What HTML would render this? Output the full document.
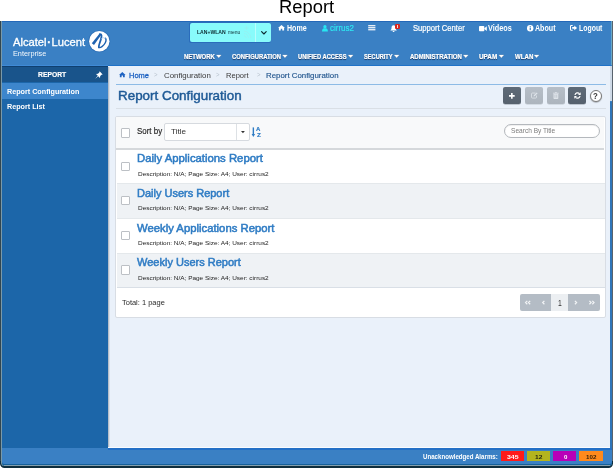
<!DOCTYPE html>
<html><head><meta charset="utf-8"><title>Report</title>
<style>
html,body{margin:0;padding:0;background:#fff;}
body{width:615px;height:471px;position:relative;overflow:hidden;font-family:"Liberation Sans",sans-serif;}
.t{position:absolute;white-space:nowrap;line-height:1;transform-origin:0 50%;display:block;}
.b{position:absolute;box-sizing:border-box;}
svg{position:absolute;overflow:visible;}
</style></head><body>
<span class="t" style="left:279.40px;top:-1.64px;font-size:18px;font-weight:400;color:#000;transform:scaleX(1.0216);">Report</span>
<div style="position:absolute;left:0;top:0;width:615px;height:471px;filter:blur(0.3px);">
<!-- window frame -->
<div class="b" style="left:0;top:21px;width:613px;height:446.9px;background:#0f2e3e;border-radius:0 0 4.5px 4.5px;"></div>
<div class="b" style="left:0;top:21px;width:613px;height:440px;background:linear-gradient(to right,#2f4652 0,#2f4652 1px,#59636d 1px,#59636d 100%);"></div>
<div class="b" style="left:0.9px;top:21px;width:611.2px;height:445.4px;background:#7a99a9;border-radius:0 0 3.6px 3.6px;"></div>
<div class="b" style="left:1.7px;top:21px;width:610.4px;height:444.6px;background:#15609a;border-radius:0 0 3px 3px;"></div>
<div class="b" style="left:2.1px;top:21px;width:610px;height:443.4px;background:#3a80c4;border-radius:0 0 2.2px 2.2px;"></div>
<div class="b" style="left:610.7px;top:21px;width:1.4px;height:44px;background:#68a8c8;"></div>
<div class="b" style="left:3.5px;top:465.45px;width:606px;height:1.05px;background:#84a0af;"></div>
<!-- top highlight line -->
<div class="b" style="left:2.1px;top:21px;width:608.6px;height:1.4px;background:#2468b8;"></div>
<!-- sidebar -->
<div class="b" style="left:2.2px;top:66.3px;width:105.8px;height:381.5px;background:#1c66a9;"></div>
<div class="b" style="left:2.2px;top:66.3px;width:105.8px;height:16.2px;background:#19548b;"></div>
<div class="b" style="left:2.2px;top:82.5px;width:105.8px;height:16.5px;background:#3d86cc;"></div>
<!-- content bg -->
<div class="b" style="left:108px;top:66.3px;width:502.1px;height:382.1px;background:#eaf1fa;"></div>
<div class="b" style="left:2px;top:65px;width:106px;height:1.2px;background:#3f8ad6;"></div>
<div class="b" style="left:108px;top:65px;width:502.7px;height:1.3px;background:#1f72c8;"></div>
<div class="b" style="left:2.2px;top:66.2px;width:105.8px;height:1.3px;background:#0f4071;"></div>
<div class="b" style="left:108px;top:67px;width:2.2px;height:380.8px;background:linear-gradient(to right,rgba(70,80,95,.42),rgba(70,80,95,0));"></div>
<!-- right strip -->
<div class="b" style="left:610.1px;top:66.3px;width:2px;height:35.2px;background:#cfdae7;"></div>
<div class="b" style="left:610.1px;top:101.5px;width:2px;height:346.9px;background:#2f75b8;"></div>
<div class="b" style="left:108px;top:447.3px;width:502.1px;height:1.1px;background:#fafcff;"></div>
<div class="b" style="left:108px;top:448.4px;width:504.1px;height:1.2px;background:#2470c6;"></div>
<!-- breadcrumb underline -->
<div class="b" style="left:116px;top:83.7px;width:489.5px;height:1px;background:#8dbbe6;"></div>
<!-- title underline -->
<div class="b" style="left:116px;top:107.5px;width:489.5px;height:1px;background:#d9dfe6;"></div>
<!-- pin icon -->
<svg style="left:95px;top:70.5px" width="8" height="8" viewBox="0 0 8 8"><path d="M4.6 0.3 L7.7 3.4 L6.6 3.7 L5.2 5.1 L5 7 L3.2 5.2 L0.6 7.6 L0.4 7.4 L2.8 4.8 L1 3 L2.9 2.8 L4.3 1.4 Z" fill="#fff"/></svg>
<!-- logo circle -->
<svg style="left:88.8px;top:31.3px" width="20.6" height="20.6" viewBox="0 0 20.6 20.6">
<circle cx="10.3" cy="10.3" r="10.9" fill="#2b6db6"/>
<circle cx="10.3" cy="10.3" r="10.2" fill="#fff"/>
<path d="M2.8 12.2 L5.0 13.9 L12.0 4.2 L10.6 2.5 Z" fill="#1f62b0"/>
<path d="M10.9 3.1 C12.9 2.9 12.7 5 12.1 7.5 C11.2 11.2 9.3 15 9.9 16.3" fill="none" stroke="#1f62b0" stroke-width="1.8" stroke-linecap="round"/>
<path d="M9.9 16.3 C11 17.6 14.8 14.8 16.3 11.8 C17.3 9.8 17.2 8.2 16.4 7.2" fill="none" stroke="#1f62b0" stroke-width="1.4" stroke-linecap="round"/>
<path d="M12 8.2 C13.4 6.2 15.8 6.2 16.5 8.3" fill="none" stroke="#a9c9ea" stroke-width="0.8"/>
</svg>
<!-- LAN+WLAN box -->
<div class="b" style="left:188.8px;top:22.4px;width:82.5px;height:20.2px;background:#2a6cbc;border-radius:2.6px;"></div>
<div class="b" style="left:189.5px;top:23px;width:81.2px;height:19px;background:#88fbfb;border-radius:2px;"></div>
<div class="b" style="left:255.2px;top:23px;width:1px;height:19px;background:#b9fdfd;"></div>
<svg style="left:260.5px;top:31.2px" width="5.8" height="3.8" viewBox="0 0 5.8 3.8"><path d="M0.6 0.7 L2.9 3 L5.2 0.7" fill="none" stroke="#0c2a30" stroke-width="1.15" stroke-linecap="round" stroke-linejoin="round"/></svg>
<!-- faint wifi -->
<svg style="left:241px;top:25px" width="11" height="14" viewBox="0 0 11 14"><g fill="none" stroke="#9aeeee" stroke-width="0.7"><path d="M3 11 a2 2 0 0 1 2 2"/><path d="M3 8.6 a4.4 4.4 0 0 1 4.4 4.4"/><path d="M3 6.2 a6.8 6.8 0 0 1 6.8 6.8"/><path d="M5.5 1 v4 M3.5 3 h4"/></g></svg>
<!-- home icon (nav) -->
<svg style="left:278.3px;top:25px" width="7" height="5.6" viewBox="0 0 14 11"><path d="M7 0 L14 6 L12.2 6 L12.2 11 L8.5 11 L8.5 7.3 L5.5 7.3 L5.5 11 L1.8 11 L1.8 6 L0 6 Z" fill="#fff"/></svg>
<!-- user icon -->
<svg style="left:321.6px;top:24.7px" width="5.9" height="6.4" viewBox="0 0 11 12"><circle cx="5.5" cy="3.1" r="3.1" fill="#27e6f2"/><path d="M0 12 C0 7 2.5 6.2 5.5 6.2 C8.5 6.2 11 7 11 12 Z" fill="#27e6f2"/></svg>
<!-- list icon -->
<svg style="left:368.1px;top:25.4px" width="7.6" height="5.4" viewBox="0 0 16 12"><rect x="0" y="0" width="16" height="3" fill="#e8eef6"/><rect x="0" y="4.5" width="16" height="3" fill="#e8eef6"/><rect x="0" y="9" width="16" height="3" fill="#e8eef6"/></svg>
<!-- bell -->
<svg style="left:390.2px;top:24.8px" width="7.2" height="7.4" viewBox="0 0 14 15"><path d="M7 0.5 C10 0.5 11.2 3 11.2 6 C11.2 9 12.4 10 13.6 11.2 L0.4 11.2 C1.6 10 2.8 9 2.8 6 C2.8 3 4 0.5 7 0.5 Z" fill="#fff"/><path d="M5 12.3 a2 2 0 0 0 4 0 Z" fill="#fff"/></svg>
<div class="b" style="left:395.3px;top:23.6px;width:4.3px;height:5.4px;background:#d8261e;border-radius:1.3px;"></div>
<div class="b" style="left:397.1px;top:24.7px;width:0.8px;height:3.1px;background:#f6d6d2;"></div>
<!-- camera -->
<svg style="left:479.3px;top:25.5px" width="7.8" height="5.2" viewBox="0 0 15 10"><rect x="0" y="0" width="10.2" height="10" rx="1.5" fill="#fff"/><path d="M10.2 4.2 L15 0.4 L15 9.6 L10.2 5.8 Z" fill="#fff"/></svg>
<!-- info icon -->
<svg style="left:526.8px;top:24.8px" width="6.4" height="6.4" viewBox="0 0 12 12"><circle cx="6" cy="6" r="6" fill="#fff"/><rect x="5" y="5" width="2.2" height="4.6" fill="#3a80c4"/><rect x="5" y="2.2" width="2.2" height="1.9" fill="#3a80c4"/></svg>
<!-- logout icon -->
<svg style="left:570.3px;top:25px" width="7.2" height="5.8" viewBox="0 0 14 11"><path d="M5.2 1 H2.4 Q1 1 1 2.4 V8.6 Q1 10 2.4 10 H5.2" fill="none" stroke="#fff" stroke-width="2"/><path d="M4.3 3.6 H8.3 V0.8 L13.8 5.5 L8.3 10.2 V7.4 H4.3 Z" fill="#fff"/></svg>
<!-- menu carets -->
<svg style="left:0;top:0" width="615" height="471" viewBox="0 0 615 471"><g fill="#fff" stroke="#fff" stroke-width="0.3" stroke-linejoin="round" style="filter:drop-shadow(0 0.6px 0.6px rgba(0,0,30,.55))">
<path d="M216.3 55 h4.9 l-2.45 2.8 z"/>
<path d="M282.5 55 h4.9 l-2.45 2.8 z"/>
<path d="M348.2 55 h4.9 l-2.45 2.8 z"/>
<path d="M394.2 55 h4.9 l-2.45 2.8 z"/>
<path d="M463.3 55 h4.9 l-2.45 2.8 z"/>
<path d="M498.9 55 h4.9 l-2.45 2.8 z"/>
<path d="M534.1 55 h4.9 l-2.45 2.8 z"/>
</g></svg>
<!-- breadcrumb home icon -->
<svg style="left:119.4px;top:72.3px" width="6.6" height="5.4" viewBox="0 0 14 11"><path d="M7 0 L14 6 L12.2 6 L12.2 11 L8.5 11 L8.5 7.3 L5.5 7.3 L5.5 11 L1.8 11 L1.8 6 L0 6 Z" fill="#1f63c2"/></svg>
<!-- toolbar buttons -->
<div class="b" style="left:503.1px;top:87.1px;width:17.9px;height:16.8px;background:linear-gradient(#5e6a77,#56616d);border-radius:2px;box-shadow:0 0.6px 0.6px rgba(40,50,60,.45);"></div>
<div class="b" style="left:524.9px;top:87.1px;width:18.6px;height:16.8px;background:linear-gradient(#b6bec7,#adb5be);border-radius:2px;box-shadow:0 0.6px 0.6px rgba(90,100,110,.3);"></div>
<div class="b" style="left:546.6px;top:87.1px;width:18.6px;height:16.8px;background:linear-gradient(#b6bec7,#adb5be);border-radius:2px;box-shadow:0 0.6px 0.6px rgba(90,100,110,.3);"></div>
<div class="b" style="left:568px;top:87.1px;width:18px;height:16.8px;background:linear-gradient(#5e6a77,#56616d);border-radius:2px;box-shadow:0 0.6px 0.6px rgba(40,50,60,.45);"></div>
<!-- plus -->
<svg style="left:509.3px;top:92.6px" width="5.7" height="5.7" viewBox="0 0 6.4 6.4"><path d="M2.3 0 h1.8 v2.3 h2.3 v1.8 h-2.3 v2.3 h-1.8 v-2.3 h-2.3 v-1.8 h2.3 z" fill="#fff"/></svg>
<!-- edit -->
<svg style="left:530.6px;top:92px" width="7" height="6.6" viewBox="0 0 14 13"><path d="M9 2 H2.5 Q1 2 1 3.5 V10.5 Q1 12 2.5 12 H9.5 Q11 12 11 10.5 V7" fill="none" stroke="#dfe4ea" stroke-width="1.6"/><path d="M5 9 L5.6 6.6 L11.4 0.8 L13.2 2.6 L7.4 8.4 Z" fill="#dfe4ea"/></svg>
<!-- trash -->
<svg style="left:553px;top:91.6px" width="5.8" height="7.2" viewBox="0 0 12 15"><path d="M1 3.4 H11 V13 Q11 14.5 9.5 14.5 H2.5 Q1 14.5 1 13 Z" fill="#dfe4ea"/><rect x="0" y="1.6" width="12" height="1.6" fill="#dfe4ea"/><rect x="4" y="0" width="4" height="1.6" fill="#dfe4ea"/><rect x="3.4" y="5.4" width="1.3" height="6.6" fill="#b1b9c2"/><rect x="7.3" y="5.4" width="1.3" height="6.6" fill="#b1b9c2"/></svg>
<!-- refresh -->
<svg style="left:573.6px;top:92px" width="7" height="7" viewBox="0 0 14 14"><path d="M2 6 A5.2 5.2 0 0 1 11 3.4" fill="none" stroke="#fff" stroke-width="2.4"/><path d="M13.4 0.6 V6 H8 Z" fill="#fff"/><path d="M12 8 A5.2 5.2 0 0 1 3 10.6" fill="none" stroke="#fff" stroke-width="2.4"/><path d="M0.6 13.4 V8 H6 Z" fill="#fff"/></svg>
<!-- help -->
<div class="b" style="left:589.7px;top:90.1px;width:12px;height:12px;background:#fff;border:1px solid #7a7a7a;border-radius:50%;box-shadow:0 0.8px 1px rgba(0,0,0,.3);"></div>
<!-- panel -->
<div class="b" style="left:115.3px;top:116.2px;width:490.6px;height:202.3px;background:#fff;border:1px solid #d8dde4;border-radius:2px;"></div>
<div class="b" style="left:116.3px;top:148px;width:488.2px;height:1.7px;background:#d5d8db;"></div>
<div class="b" style="left:116.5px;top:183.5px;width:488px;height:34.6px;background:#eff2f5;"></div>
<div class="b" style="left:116.5px;top:252.8px;width:488px;height:34.6px;background:#eff2f5;"></div>
<div class="b" style="left:116.5px;top:183.1px;width:488px;height:1.4px;background:#e4e8eb;"></div>
<div class="b" style="left:116.5px;top:217.9px;width:488px;height:1.4px;background:#e4e8eb;"></div>
<div class="b" style="left:116.5px;top:252.5px;width:488px;height:1.4px;background:#e4e8eb;"></div>
<div class="b" style="left:116.5px;top:287px;width:488px;height:1px;background:#d9dfe6;"></div>
<div class="b" style="left:116.3px;top:117.2px;width:488.2px;height:31px;background:#f8f9fa;border-radius:1px 1px 0 0;"></div>
<!-- checkboxes -->
<div class="b" style="left:120.8px;top:128.3px;width:9.5px;height:9.4px;background:#fff;border:1.1px solid #bcc0c5;border-radius:1px;"></div>
<div class="b" style="left:120.8px;top:161.5px;width:9.5px;height:9.4px;background:#fff;border:1.1px solid #bcc0c5;border-radius:1px;"></div>
<div class="b" style="left:120.8px;top:196.1px;width:9.5px;height:9.4px;background:#fff;border:1.1px solid #bcc0c5;border-radius:1px;"></div>
<div class="b" style="left:120.8px;top:230.7px;width:9.5px;height:9.4px;background:#fff;border:1.1px solid #bcc0c5;border-radius:1px;"></div>
<div class="b" style="left:120.8px;top:265.3px;width:9.5px;height:9.4px;background:#fff;border:1.1px solid #bcc0c5;border-radius:1px;"></div>
<!-- select -->
<div class="b" style="left:164.2px;top:123.2px;width:85.4px;height:17.4px;background:#fff;border:1px solid #d6dadf;border-radius:2px;"></div>
<div class="b" style="left:235.9px;top:124.2px;width:0.9px;height:15.4px;background:#dde1e5;"></div>
<svg style="left:240.8px;top:131.1px" width="3.9" height="2.2" viewBox="0 0 3.6 2"><path d="M0 0 H3.6 L1.8 2 Z" fill="#333"/></svg>
<!-- sort icon -->
<svg style="left:251.4px;top:126.6px" width="11" height="11.4" viewBox="0 0 11 11.4"><path d="M2.35 0.4 V8" stroke="#2f7cc4" stroke-width="1.4" fill="none"/><path d="M0.6 7 H4.1 L2.35 10.1 Z" fill="#2f7cc4"/></svg>
<!-- search -->
<div class="b" style="left:503.8px;top:123.8px;width:96px;height:14.7px;background:#fff;border:1px solid #b4b8bd;border-radius:7.4px;box-shadow:inset 0 0.6px 0.8px rgba(0,0,0,.12);"></div>
<!-- pagination -->
<div class="b" style="left:519.7px;top:294.3px;width:80.2px;height:16.6px;background:#b4bcc5;border-radius:2px;"></div>
<div class="b" style="left:551.4px;top:294.3px;width:16.6px;height:16.6px;background:#eceff2;"></div>
<svg style="left:0;top:0" width="615" height="471" viewBox="0 0 615 471"><g fill="none" stroke="#f2f4f6" stroke-width="1.25">
<path d="M527.3 300.9 l-1.7 1.7 l1.7 1.7 M530.2 300.9 l-1.7 1.7 l1.7 1.7"/>
<path d="M544.4 300.9 l-1.7 1.7 l1.7 1.7"/>
<path d="M574.9 300.9 l1.7 1.7 l-1.7 1.7"/>
<path d="M589.4 300.9 l1.7 1.7 l-1.7 1.7 M592.3 300.9 l1.7 1.7 l-1.7 1.7"/>
</g></svg>
<!-- footer alarms -->
<div class="b" style="left:500.5px;top:451.3px;width:23.4px;height:9.9px;background:#ff1a1a;"></div>
<div class="b" style="left:527.2px;top:451.3px;width:22.8px;height:9.9px;background:#b4b41e;"></div>
<div class="b" style="left:553.2px;top:451.3px;width:22.8px;height:9.9px;background:#b800b8;"></div>
<div class="b" style="left:579.2px;top:451.3px;width:23.8px;height:9.9px;background:#ff8a1c;"></div>

<span class="t" style="left:13.10px;top:37.43px;font-size:11.3px;font-weight:400;color:#fff;transform:scaleX(0.9904);-webkit-text-stroke:0.3px #fff;">Alcatel<b style="margin:0 0.6px">·</b>Lucent</span>
<span class="t" style="left:13.10px;top:50.18px;font-size:7.7px;font-weight:400;color:#f4f8fc;transform:scaleX(0.9502);">Enterprise</span>
<span class="t" style="left:196.90px;top:29.66px;font-size:5.6px;font-weight:700;color:#0c2a30;transform:scaleX(0.9098);">LAN+WLAN</span>
<span class="t" style="left:227.60px;top:29.91px;font-size:5.3px;font-weight:400;color:#0c2a30;transform:scaleX(0.9283);">menu</span>
<span class="t" style="left:287.00px;top:23.67px;font-size:8.3px;font-weight:700;color:#fff;transform:scaleX(0.8542);">Home</span>
<span class="t" style="left:329.50px;top:23.67px;font-size:8.3px;font-weight:400;color:#2fe4f0;transform:scaleX(0.9636);-webkit-text-stroke:0.2px #2fe4f0;">cirrus2</span>
<span class="t" style="left:412.50px;top:23.67px;font-size:8.3px;font-weight:400;color:#fff;transform:scaleX(0.9186);-webkit-text-stroke:0.2px #fff;">Support Center</span>
<span class="t" style="left:487.90px;top:23.67px;font-size:8.3px;font-weight:700;color:#fff;transform:scaleX(0.8758);">Videos</span>
<span class="t" style="left:535.00px;top:23.67px;font-size:8.3px;font-weight:700;color:#fff;transform:scaleX(0.8553);">About</span>
<span class="t" style="left:579.30px;top:23.67px;font-size:8.3px;font-weight:700;color:#fff;transform:scaleX(0.8325);">Logout</span>
<span class="t" style="left:184.30px;top:54.20px;font-size:6.5px;font-weight:700;color:#fff;transform:scaleX(0.9198);text-shadow:0 0.7px 0.9px rgba(0,0,30,.6);-webkit-text-stroke:0.22px #fff;">NETWORK</span>
<span class="t" style="left:232.30px;top:54.20px;font-size:6.5px;font-weight:700;color:#fff;transform:scaleX(0.9006);text-shadow:0 0.7px 0.9px rgba(0,0,30,.6);-webkit-text-stroke:0.22px #fff;">CONFIGURATION</span>
<span class="t" style="left:298.30px;top:54.20px;font-size:6.5px;font-weight:700;color:#fff;transform:scaleX(0.8874);text-shadow:0 0.7px 0.9px rgba(0,0,30,.6);-webkit-text-stroke:0.22px #fff;">UNIFIED ACCESS</span>
<span class="t" style="left:364.20px;top:54.20px;font-size:6.5px;font-weight:700;color:#fff;transform:scaleX(0.8700);text-shadow:0 0.7px 0.9px rgba(0,0,30,.6);-webkit-text-stroke:0.22px #fff;">SECURITY</span>
<span class="t" style="left:410.10px;top:54.20px;font-size:6.5px;font-weight:700;color:#fff;transform:scaleX(0.9291);text-shadow:0 0.7px 0.9px rgba(0,0,30,.6);-webkit-text-stroke:0.22px #fff;">ADMINISTRATION</span>
<span class="t" style="left:479.40px;top:54.20px;font-size:6.5px;font-weight:700;color:#fff;transform:scaleX(0.9755);text-shadow:0 0.7px 0.9px rgba(0,0,30,.6);-webkit-text-stroke:0.22px #fff;">UPAM</span>
<span class="t" style="left:514.50px;top:54.20px;font-size:6.5px;font-weight:700;color:#fff;transform:scaleX(0.9385);text-shadow:0 0.7px 0.9px rgba(0,0,30,.6);-webkit-text-stroke:0.22px #fff;">WLAN</span>
<span class="t" style="left:38.00px;top:70.53px;font-size:8px;font-weight:700;color:#fff;transform:scaleX(0.8457);-webkit-text-stroke:0.2px #fff;">REPORT</span>
<span class="t" style="left:7.00px;top:87.91px;font-size:7.9px;font-weight:700;color:#fff;transform:scaleX(0.9112);">Report Configuration</span>
<span class="t" style="left:7.00px;top:102.91px;font-size:7.9px;font-weight:700;color:#fff;transform:scaleX(0.9122);">Report List</span>
<span class="t" style="left:129.40px;top:71.91px;font-size:7.9px;font-weight:400;color:#1f63c2;transform:scaleX(0.9496);-webkit-text-stroke:0.3px #1f63c2;">Home</span>
<span class="t" style="left:154.00px;top:71.47px;font-size:7px;font-weight:400;color:#b9c3cf;transform:scaleX(0.8550);">&gt;</span>
<span class="t" style="left:164.30px;top:71.91px;font-size:7.9px;font-weight:400;color:#3a3a3a;transform:scaleX(0.9971);">Configuration</span>
<span class="t" style="left:216.00px;top:71.47px;font-size:7px;font-weight:400;color:#b9c3cf;transform:scaleX(0.8550);">&gt;</span>
<span class="t" style="left:226.20px;top:71.91px;font-size:7.9px;font-weight:400;color:#3a3a3a;transform:scaleX(0.9583);">Report</span>
<span class="t" style="left:256.50px;top:71.47px;font-size:7px;font-weight:400;color:#b9c3cf;transform:scaleX(0.8550);">&gt;</span>
<span class="t" style="left:266.30px;top:71.91px;font-size:7.9px;font-weight:400;color:#24578f;transform:scaleX(0.9957);-webkit-text-stroke:0.15px #24578f;">Report Configuration</span>
<span class="t" style="left:118.40px;top:88.80px;font-size:13px;font-weight:400;color:#1f5a96;transform:scaleX(1.0311);-webkit-text-stroke:0.45px #1f5a96;">Report Configuration</span>
<span class="t" style="left:137.20px;top:127.37px;font-size:8.3px;font-weight:400;color:#222;transform:scaleX(0.9545);-webkit-text-stroke:0.15px #222;">Sort by</span>
<span class="t" style="left:171.20px;top:127.78px;font-size:7.7px;font-weight:400;color:#333;transform:scaleX(1.0596);">Title</span>
<span class="t" style="left:510.50px;top:127.73px;font-size:6.7px;font-weight:400;color:#7c7c7c;transform:scaleX(0.9826);">Search By Title</span>
<span class="t" style="left:137.40px;top:153.24px;font-size:10.7px;font-weight:400;color:#2f7cc4;transform:scaleX(1.0597);-webkit-text-stroke:0.5px #2f7cc4;">Daily Applications Report</span>
<span class="t" style="left:137.50px;top:170.72px;font-size:6.0px;font-weight:400;color:#1c1c1c;transform:scaleX(1.0738);">Description: N/A; Page Size: A4; User: cirrus2</span>
<span class="t" style="left:137.40px;top:187.84px;font-size:10.7px;font-weight:400;color:#2f7cc4;transform:scaleX(1.0280);-webkit-text-stroke:0.5px #2f7cc4;">Daily Users Report</span>
<span class="t" style="left:137.50px;top:205.32px;font-size:6.0px;font-weight:400;color:#1c1c1c;transform:scaleX(1.0738);">Description: N/A; Page Size: A4; User: cirrus2</span>
<span class="t" style="left:137.40px;top:223.44px;font-size:10.7px;font-weight:400;color:#2f7cc4;transform:scaleX(1.0577);-webkit-text-stroke:0.5px #2f7cc4;">Weekly Applications Report</span>
<span class="t" style="left:137.50px;top:239.92px;font-size:6.0px;font-weight:400;color:#1c1c1c;transform:scaleX(1.0738);">Description: N/A; Page Size: A4; User: cirrus2</span>
<span class="t" style="left:137.40px;top:257.04px;font-size:10.7px;font-weight:400;color:#2f7cc4;transform:scaleX(1.0300);-webkit-text-stroke:0.5px #2f7cc4;">Weekly Users Report</span>
<span class="t" style="left:137.50px;top:274.52px;font-size:6.0px;font-weight:400;color:#1c1c1c;transform:scaleX(1.0738);">Description: N/A; Page Size: A4; User: cirrus2</span>
<span class="t" style="left:121.60px;top:298.85px;font-size:7.5px;font-weight:400;color:#2a2a2a;transform:scaleX(0.9964);">Total: 1 page</span>
<span class="t" style="left:557.80px;top:299.66px;font-size:8.2px;font-weight:400;color:#333;transform:scaleX(0.8329);">1</span>
<span class="t" style="left:593.30px;top:91.85px;font-size:8.8px;font-weight:700;color:#3a3a3a;transform:scaleX(0.8930);">?</span>
<span class="t" style="left:256.40px;top:126.32px;font-size:6px;font-weight:700;color:#2f7cc4;transform:scaleX(0.9899);-webkit-text-stroke:0.2px #2f7cc4;">A</span>
<span class="t" style="left:256.80px;top:131.92px;font-size:6px;font-weight:700;color:#2f7cc4;transform:scaleX(1.0621);-webkit-text-stroke:0.2px #2f7cc4;">Z</span>
<span class="t" style="left:423.10px;top:453.27px;font-size:7px;font-weight:700;color:#fff;transform:scaleX(0.8766);">Unacknowledged Alarms:</span>
<span class="t" style="left:506.80px;top:453.55px;font-size:6.2px;font-weight:700;color:#fff;transform:scaleX(1.1231);">345</span>
<span class="t" style="left:535.20px;top:453.55px;font-size:6.2px;font-weight:700;color:#2a2a10;transform:scaleX(1.0739);">12</span>
<span class="t" style="left:563.60px;top:453.55px;font-size:6.2px;font-weight:700;color:#fff;transform:scaleX(0.9846);">0</span>
<span class="t" style="left:586.00px;top:453.55px;font-size:6.2px;font-weight:700;color:#3a2208;transform:scaleX(1.0070);">102</span>
</div>
</body></html>
